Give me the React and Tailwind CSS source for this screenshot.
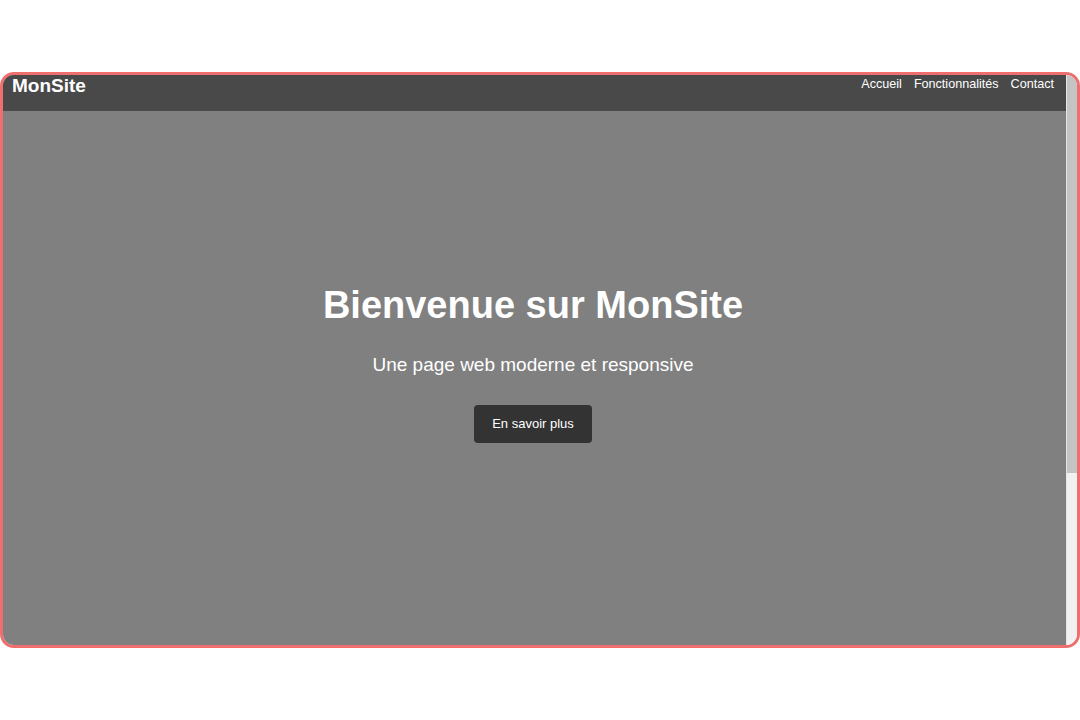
import React from 'react'

const links = ['Accueil', 'Fonctionnalités', 'Contact']

const App = () => {
    return (
        <div
            className="w-[1080px] h-[720px] bg-white pt-[72px]"
            style={{ fontFamily: '"Liberation Sans", Arial, sans-serif' }}
        >
            <div className="h-[576px] border-[3px] border-[#ef6f6f] rounded-[14px] overflow-hidden flex">
                <div className="flex-1 flex flex-col bg-[#808080]">
                    <nav className="h-[36px] bg-[#494949] flex items-start justify-between pl-[9px] pr-[12px]">
                        <div className="text-white font-bold text-[19px] leading-[20px] pt-[1px]">
                            MonSite
                        </div>
                        <ul className="flex gap-[12px] text-white text-[12.6px] leading-[16px] pt-[1px]">
                            {links.map((l) => (
                                <li key={l}>{l}</li>
                            ))}
                        </ul>
                    </nav>
                    <section className="flex-1 flex flex-col items-center justify-center text-white pb-[30px] pr-[3px]">
                        <h1 className="font-bold text-[38px] leading-[44px]">
                            Bienvenue sur MonSite
                        </h1>
                        <p className="text-[19px] leading-[22px] mt-[27px]">
                            Une page web moderne et responsive
                        </p>
                        <button className="mt-[29px] bg-[#333333] text-white text-[13px] rounded-[4px] w-[118px] h-[38px]">
                            En savoir plus
                        </button>
                    </section>
                </div>
                <div className="w-[11px] flex flex-col border-l border-[#e6e6e6]">
                    <div className="h-[398px] bg-[#c4c4c4]" />
                    <div className="flex-1 bg-[#f1f1f1]" />
                </div>
            </div>
        </div>
    )
}

export default App
